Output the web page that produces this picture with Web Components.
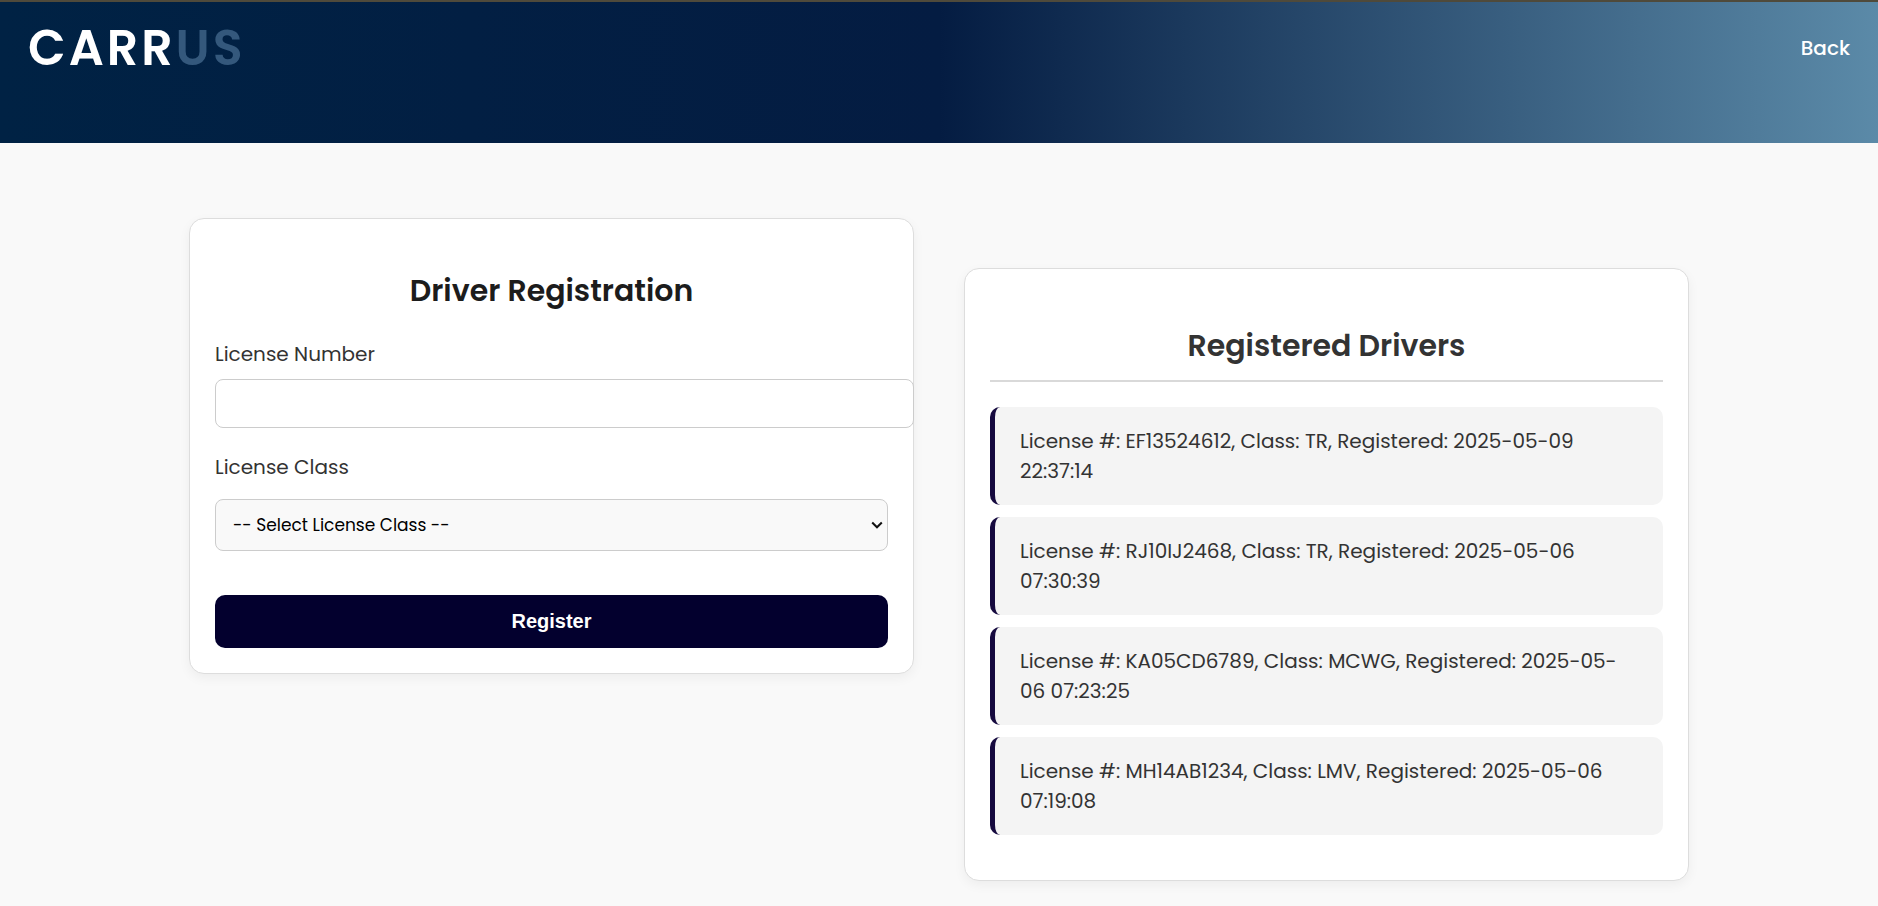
<!DOCTYPE html>
<html lang="en">
<head>
<meta charset="utf-8">
<meta name="viewport" content="width=device-width, initial-scale=1">
<title>Carrus - Driver Registration</title>
<style>
  body { margin: 0; min-height: 100vh; background: #f9f9f9; color: #333; font-family: Poppins, Inter, sans-serif; font-size: 20px; line-height: 30px; }
</style>
</head>
<body>
<carrus-header>
  <span slot="brand">CARR</span>
  <span slot="accent">US</span>
  <a slot="nav" href="#back">Back</a>
</carrus-header>
<registration-layout>
  <panel-card><driver-form></driver-form></panel-card>
  <panel-card class="lower">
    <driver-list>
      <driver-entry>License #: EF13524612, Class: TR, Registered: 2025-05-09 22:37:14</driver-entry>
      <driver-entry>License #: RJ10IJ2468, Class: TR, Registered: 2025-05-06 07:30:39</driver-entry>
      <driver-entry>License #: KA05CD6789, Class: MCWG, Registered: 2025-05-06 07:23:25</driver-entry>
      <driver-entry>License #: MH14AB1234, Class: LMV, Registered: 2025-05-06 07:19:08</driver-entry>
    </driver-list>
  </panel-card>
</registration-layout>

<script>
  const define = (name, html) => {
    const template = document.createElement('template');
    template.innerHTML = html;
    customElements.define(name, class extends HTMLElement {
      constructor() {
        super();
        this.attachShadow({ mode: 'open' }).append(template.content.cloneNode(true));
      }
    });
  };

  define('carrus-header', `
    <style>
      :host { display: block; border-top: 2px solid #4f4a3b; background: linear-gradient(to right, #002244, #041c42 50%, #5b8aa8); }
      header { display: flex; justify-content: space-between; align-items: center; padding: 16px 28px 65px; }
      .logo { display: flex; color: #fff; font-size: 49px; font-weight: 600; line-height: 60px; letter-spacing: 3px; }
      .accent { color: #34587c; }
      ::slotted(a) { color: #fff; font-weight: 500; text-decoration: none; }
    </style>
    <header>
      <div class="logo"><slot name="brand"></slot><span class="accent"><slot name="accent"></slot></span></div>
      <nav><slot name="nav"></slot></nav>
    </header>`);

  define('registration-layout', `
    <style>
      :host { display: block; padding: 75px 24px 25px; }
      main { display: grid; grid-template-columns: 1fr 1fr; gap: 50px; align-items: start; max-width: 1500px; margin: 0 auto; }
      ::slotted(.lower) { margin-top: 50px; }
    </style>
    <main><slot></slot></main>`);

  define('panel-card', `
    <style>
      :host { display: block; min-width: 0; padding: 25px; border: 1px solid #ddd; border-radius: 15px; background: #fff; box-shadow: 0 4px 12px rgba(0, 0, 0, .05); }
    </style>
    <slot></slot>`);

  define('driver-form', `
    <style>
      :host { display: block; }
      h2 { margin: 24px 0 25px; color: #1c1c1c; font-size: 30px; font-weight: 600; line-height: 46px; text-align: center; }
      form { display: flex; flex-direction: column; }
      label { display: block; }
      input { box-sizing: content-box; width: 100%; height: 23px; margin: 10px 0 24px; padding: 12px; border: 1px solid #ccc; border-radius: 8px; background: #fff; font: inherit; font-size: 17px; }
      .picker { display: grid; margin: 17px 0 44px; }
      .picker > * { grid-area: 1 / 1; }
      select { appearance: none; width: 100%; height: 52px; padding: 0 17px; border: 1px solid #ccc; border-radius: 8px; background: #f9f9f9; color: #000; font: inherit; font-size: 17px; }
      svg { place-self: center end; width: 12px; height: 8px; margin-right: 5px; pointer-events: none; }
      button { height: 53px; padding: 0; border: 0; border-radius: 10px; background: #03002e; color: #fff; font: bold 20px "Liberation Sans", Arial, sans-serif; cursor: pointer; }
    </style>
    <h2>Driver Registration</h2>
    <form>
      <label for="number">License Number</label>
      <input id="number" type="text" required>
      <label for="class">License Class</label>
      <div class="picker">
        <select id="class" required>
          <option value="">-- Select License Class --</option>
          <option>LMV</option>
          <option>MCWG</option>
          <option>TR</option>
        </select>
        <svg viewBox="0 0 12 8" aria-hidden="true"><path d="M1.2 1.5 6 6.3l4.800-4.800" fill="none" stroke="#111" stroke-width="2"/></svg>
      </div>
      <button type="submit">Register</button>
    </form>`);

  define('driver-list', `
    <style>
      :host { display: block; }
      h2 { margin: 29px 0 25px; padding-bottom: 11px; border-bottom: 2px solid #d9d9d9; color: #333; font-size: 30px; font-weight: 600; line-height: 46px; text-align: center; }
      .entries { display: flex; flex-direction: column; gap: 12px; margin-bottom: 20px; }
    </style>
    <h2>Registered Drivers</h2>
    <div class="entries" role="list"><slot></slot></div>`);

  define('driver-entry', `
    <style>
      :host { display: block; padding: 19px 25px; border-left: 5px solid #160a3f; border-radius: 10px; background: #f4f4f4; }
    </style>
    <div role="listitem"><slot></slot></div>`);
</script>
</body>
</html>
